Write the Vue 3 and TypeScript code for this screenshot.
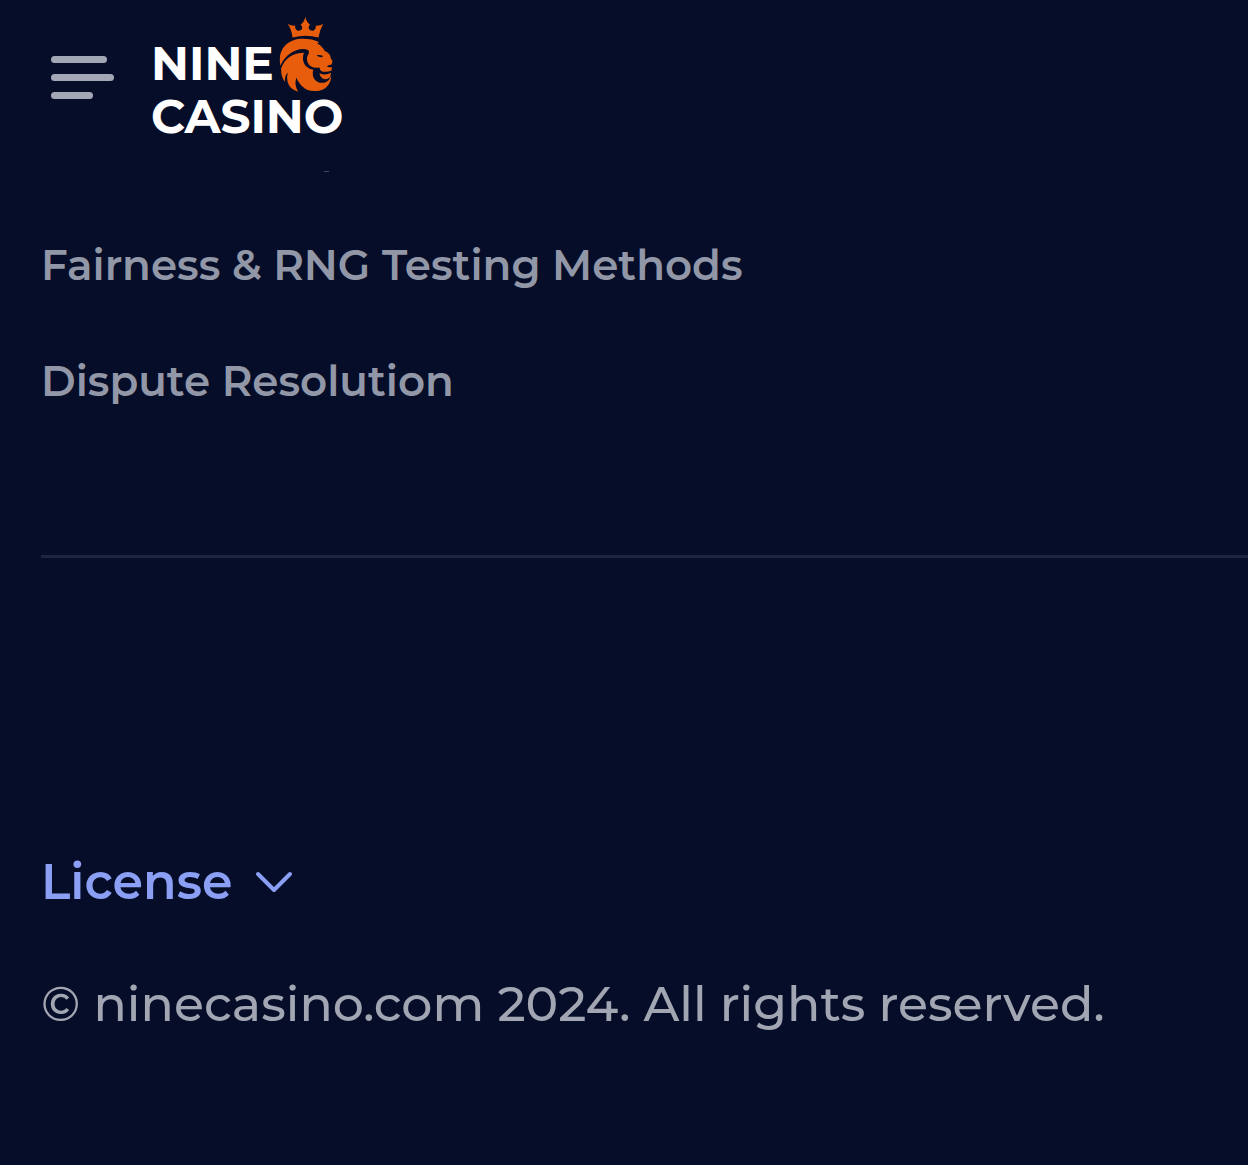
<script setup lang="ts">
const links: string[] = ['Fairness & RNG Testing Methods', 'Dispute Resolution']
const menuBars: number[] = [56, 63, 42]
</script>

<template>
  <div class="page">
    <header class="header">
      <button class="menu" type="button" aria-label="Menu">
        <span v-for="w in menuBars" :key="w" class="bar" :style="{ width: w + 'px' }"></span>
      </button>
      <a class="logo" href="#" aria-label="Nine Casino">
        <span class="logo-top">
          <span class="nine">NINE</span>
          <svg class="lion" viewBox="28 21 160 223" aria-hidden="true">
            <g fill="#e85d0c">
              <path d="M54 42 Q64 48 76 47 Q74 57 83 62 Q95 63 97 54 Q97 48 92 44 Q102 37 106 21 Q110 37 120 44 Q115 48 116 54 Q118 63 130 62 Q138 57 137 47 Q148 48 159 42 Q149 59 145 82 Q107 72 68 82 Q65 58 54 42Z" />
              <path d="M32 166 C22 116 55 86 98 86 Q128 86 147 96 L141 100 C152 104 157 112 164 122 Q177 128 180 137 Q181 145 187 152 L184 162 Q174 163 170 168 Q179 172 185 170 L184 180 Q168 187 154 182 Q150 180 148 171 Q128 175 117 163 Q106 148 114 133 Q119 126 115 120 C91 108 48 127 32 166Z" />
              <path d="M148 188 Q165 196 182 187 L180 200 Q168 210 157 204 Q149 199 148 188Z" />
              <path d="M34 174 C44 143 70 127 102 127 C96 143 99 159 110 169 Q118 176 130 178 C125 192 130 208 143 214 Q155 219 168 214 Q178 208 183 197 C183 220 164 241 139 241 Q123 242 111 237 C94 229 82 211 80 201 C74 215 77 231 85 243 Q58 236 53 213 Q50 199 54 186 Q43 198 46 214 Q33 199 34 174Z" />
            </g>
            <path d="M139 135 Q149 133 159 137 L156 140 Q146 142 139 135Z" fill="#050d28" />
          </svg>
        </span>
        <span class="casino">CASINO</span>
      </a>
    </header>
    <div class="sliver"></div>

    <footer class="footer">
      <nav class="links" aria-label="Fair play">
        <a v-for="item in links" :key="item" href="#">{{ item }}</a>
      </nav>
      <hr class="rule" />
      <button class="license" type="button">
        <span>License</span>
        <svg class="chevron" viewBox="0 0 38 22" aria-hidden="true">
          <path d="M3 3 L19 19 L35 3" fill="none" stroke="#8b9ff5" stroke-width="4" stroke-linecap="round" stroke-linejoin="round" />
        </svg>
      </button>
      <p class="copyright">© ninecasino.com 2024. All rights reserved.</p>
    </footer>
  </div>
</template>

<style>
body {
  background: #050d28;
}
</style>

<style scoped>
.page {
  min-height: 100vh;
  background: #050d28;
  font-family: Montserrat, Inter, "Open Sans", sans-serif;
  overflow: hidden;
}
.header {
  display: flex;
  align-items: flex-start;
  gap: 37px;
  padding: 17px 51px 34px;
}
.menu {
  display: flex;
  flex-direction: column;
  gap: 11px;
  width: 63px;
  margin: 39px 0 0;
  padding: 0;
  border: 0;
  background: none;
}
.bar {
  height: 7px;
  border-radius: 4px;
  background: #a2a6b5;
}
.logo {
  display: flex;
  flex-direction: column;
  height: 120px;
  color: #fff;
  font-size: 47px;
  font-weight: 700;
  line-height: 52px;
  text-decoration: none;
}
.logo-top {
  display: flex;
  align-items: flex-start;
  gap: 5px;
  height: 74px;
}
.nine {
  margin-top: 21px;
}
.lion {
  width: 54px;
  height: 75px;
}
.sliver {
  width: 5px;
  height: 1px;
  margin-left: 324px;
  background: #3f465b;
}
.footer {
  padding: 67px 0 96px 41px;
}
.links {
  display: flex;
  flex-direction: column;
  align-items: flex-start;
  gap: 64px;
}
.links a {
  color: #9297a7;
  font-size: 42px;
  font-weight: 600;
  line-height: 52px;
  text-decoration: none;
}
.rule {
  height: 3px;
  margin: 148px 0 0;
  border: 0;
  background: #1c2542;
}
.license {
  display: flex;
  align-items: center;
  gap: 23px;
  margin: 296px 0 0;
  padding: 0;
  border: 0;
  background: none;
  color: #8b9ff5;
  font-family: inherit;
  font-size: 49px;
  font-weight: 600;
  line-height: 56px;
}
.chevron {
  width: 38px;
  height: 22px;
}
.copyright {
  margin: 66px 0 0;
  color: #a2a6b3;
  font-size: 49px;
  font-weight: 500;
  line-height: 56px;
}
</style>
